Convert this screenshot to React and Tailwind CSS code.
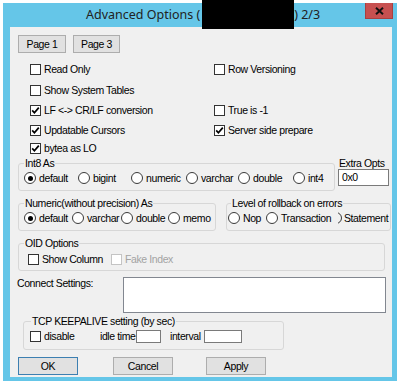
import React from "react";

const BODY_FONT = "font-['Liberation_Sans',Arial,sans-serif]";

function Check({ checked, disabled, label, className = "" }) {
  return (
    <div className={`flex items-center shrink-0 ${className}`}>
      <span
        className={`w-[11px] h-[11px] shrink-0 border bg-white flex items-center justify-center ${
          disabled ? "border-[#c4c4c4]" : "border-[#333333]"
        }`}
      >
        {checked && (
          <svg width="9" height="9" viewBox="0 0 9 9">
            <path d="M1.2 4.4 L3.4 6.8 L7.8 1.6" stroke="#000" strokeWidth="1.7" fill="none" />
          </svg>
        )}
      </span>
      <span className={`ml-[3px] ${disabled ? "text-[#a3a3a3]" : ""}`}>{label}</span>
    </div>
  );
}

function Radio({ checked, label, className = "" }) {
  return (
    <div className={`flex items-center shrink-0 ${className}`}>
      <span className="w-[12px] h-[12px] shrink-0 rounded-full border border-[#3a3a3a] bg-white flex items-center justify-center">
        {checked && <span className="w-[5px] h-[5px] rounded-full bg-black" />}
      </span>
      <span className="ml-[3px]">{label}</span>
    </div>
  );
}

function Group({ label, className = "", legendClass = "ml-[5px]", children }) {
  return (
    <fieldset className={`border border-[#d7d7d7] rounded-[3px] shrink-0 ${className}`}>
      <legend className={`px-[1px] leading-[13px] ${legendClass}`}>{label}</legend>
      {children}
    </fieldset>
  );
}

function Btn({ children, className = "" }) {
  return (
    <div
      className={`h-[18px] bg-[#e1e1e1] border flex items-center justify-center shrink-0 ${className}`}
    >
      {children}
    </div>
  );
}

export default function App() {
  return (
    <div className={`w-[400px] h-[383px] bg-white pl-[3px] pt-[3px] overflow-hidden whitespace-nowrap text-[10.5px] tracking-[-0.4px] leading-[13px] text-black ${BODY_FONT}`}>
      <div className="w-[394px] h-[378px] bg-[#65c6e8] flex flex-col">
        {/* Title bar */}
        <div className="h-[24px] flex items-start shrink-0">
          <div className="ml-[83px] flex items-start font-['Noto_Sans',sans-serif] text-[12.5px] tracking-normal text-[#222]">
            <span className="mt-[3px] leading-[18px]">Advanced Options (</span>
            <span className="ml-[2px] -mt-[3px] w-[92px] h-[29px] bg-black relative z-10" />
            <span className="mt-[3px] leading-[18px]">) 2/3</span>
          </div>
          <div className="ml-auto mr-[4px] w-[28px] h-[16px] bg-[#c75050] border border-[#a94040] border-t-0 flex items-center justify-center">
            <svg width="9" height="8" viewBox="0 0 9 8">
              <path d="M1 0.8 L8 7.2 M8 0.8 L1 7.2" stroke="#111" strokeWidth="2" />
            </svg>
          </div>
        </div>

        {/* Client area */}
        <div className="ml-[7px] w-[382px] h-[350px] bg-[#f0f0f0] flex flex-col shrink-0">
          <div className="flex mt-[8px] ml-[8px] gap-[7px]">
            <Btn className="w-[48px] border-[#adadad]">Page 1</Btn>
            <Btn className="w-[47px] border-[#adadad]">Page 3</Btn>
          </div>

          <div className="mt-[6px] pl-[20px] flex flex-col">
            <div className="flex h-[21px] items-center">
              <Check className="w-[184px]" label="Read Only" />
              <Check label="Row Versioning" />
            </div>
            <div className="flex h-[20px] items-center">
              <Check className="w-[184px]" label="Show System Tables" />
            </div>
            <div className="flex h-[21px] items-center">
              <Check className="w-[184px]" checked label="LF <-> CR/LF conversion" />
              <Check label="True is -1" />
            </div>
            <div className="flex h-[19px] items-center">
              <Check className="w-[184px]" checked label="Updatable Cursors" />
              <Check checked label="Server side prepare" />
            </div>
            <div className="flex h-[16px] items-center">
              <Check className="w-[184px]" checked label="bytea as LO" />
            </div>
          </div>

          {/* Int8 As + Extra Opts */}
          <div className="flex mt-[1px] ml-[8px]">
            <Group className="w-[317px] h-[34px]" label="Int8 As">
              <div className="flex h-[16px] items-center pl-[5px]">
                <Radio className="w-[54px]" checked label="default" />
                <Radio className="w-[53px]" label="bigint" />
                <Radio className="w-[55px]" label="numeric" />
                <Radio className="w-[52px]" label="varchar" />
                <Radio className="w-[55px]" label="double" />
                <Radio label="int4" />
              </div>
            </Group>
            <div className="ml-[3px] flex flex-col">
              <span className="leading-[12px] ml-[1px]">Extra Opts</span>
              <div className="w-[51px] h-[17px] bg-white border border-[#7a7a7a] px-[3px] flex items-center">
                0x0
              </div>
            </div>
          </div>

          {/* Numeric + rollback */}
          <div className="flex mt-[6px] ml-[8px]">
            <Group className="w-[198px] h-[34px]" label="Numeric(without precision) As">
              <div className="flex h-[16px] items-center pl-[5px]">
                <Radio className="w-[48px]" checked label="default" />
                <Radio className="w-[49px]" label="varchar" />
                <Radio className="w-[47px]" label="double" />
                <Radio label="memo" />
              </div>
            </Group>
            <Group className="ml-[10px] w-[165px] h-[34px]" legendClass="ml-[4px]" label="Level of rollback on errors">
              <div className="flex h-[16px] items-center pl-[1px]">
                <Radio className="w-[38px]" label="Nop" />
                <Radio className="w-[72px]" label="Transaction" />
                <svg width="4" height="12" viewBox="0 0 4 12" className="shrink-0">
                  <circle cx="-2" cy="6" r="5.5" stroke="#3a3a3a" strokeWidth="1" fill="none" />
                </svg>
                <span className="ml-[2px]">Statement</span>
              </div>
            </Group>
          </div>

          {/* OID Options */}
          <div className="flex mt-[6px] ml-[8px]">
            <Group className="w-[367px] h-[34px]" label="OID Options">
              <div className="flex h-[18px] items-center pl-[9px]">
                <Check className="w-[83px]" label="Show Column" />
                <Check disabled label="Fake Index" />
              </div>
            </Group>
          </div>

          {/* Connect Settings */}
          <div className="flex mt-[6px] ml-[7px]">
            <span className="w-[106px] shrink-0">Connect Settings:</span>
            <div className="w-[263px] h-[36px] bg-white border border-[#828790]" />
          </div>

          {/* TCP keepalive */}
          <div className="flex mt-[2px] ml-[13px]">
            <Group className="w-[261px] h-[35px]" legendClass="ml-[7px]" label="TCP KEEPALIVE setting (by sec)">
              <div className="flex h-[16px] items-center pl-[6px]">
                <Check className="w-[70px]" label="disable" />
                <span className="w-[35px] shrink-0">idle time</span>
                <div className="ml-[1px] w-[25px] h-[13px] bg-white border border-[#7a7a7a] shrink-0" />
                <span className="ml-[9px] w-[34px] shrink-0">interval</span>
                <div className="w-[38px] h-[13px] bg-white border border-[#7a7a7a] shrink-0" />
              </div>
            </Group>
          </div>

          {/* Buttons */}
          <div className="flex mt-[7px] ml-[8px]">
            <Btn className="w-[60px] border-[#3c7fb1]">OK</Btn>
            <Btn className="ml-[35px] w-[60px] border-[#adadad]">Cancel</Btn>
            <Btn className="ml-[33px] w-[60px] border-[#adadad]">Apply</Btn>
          </div>
        </div>
      </div>
    </div>
  );
}
